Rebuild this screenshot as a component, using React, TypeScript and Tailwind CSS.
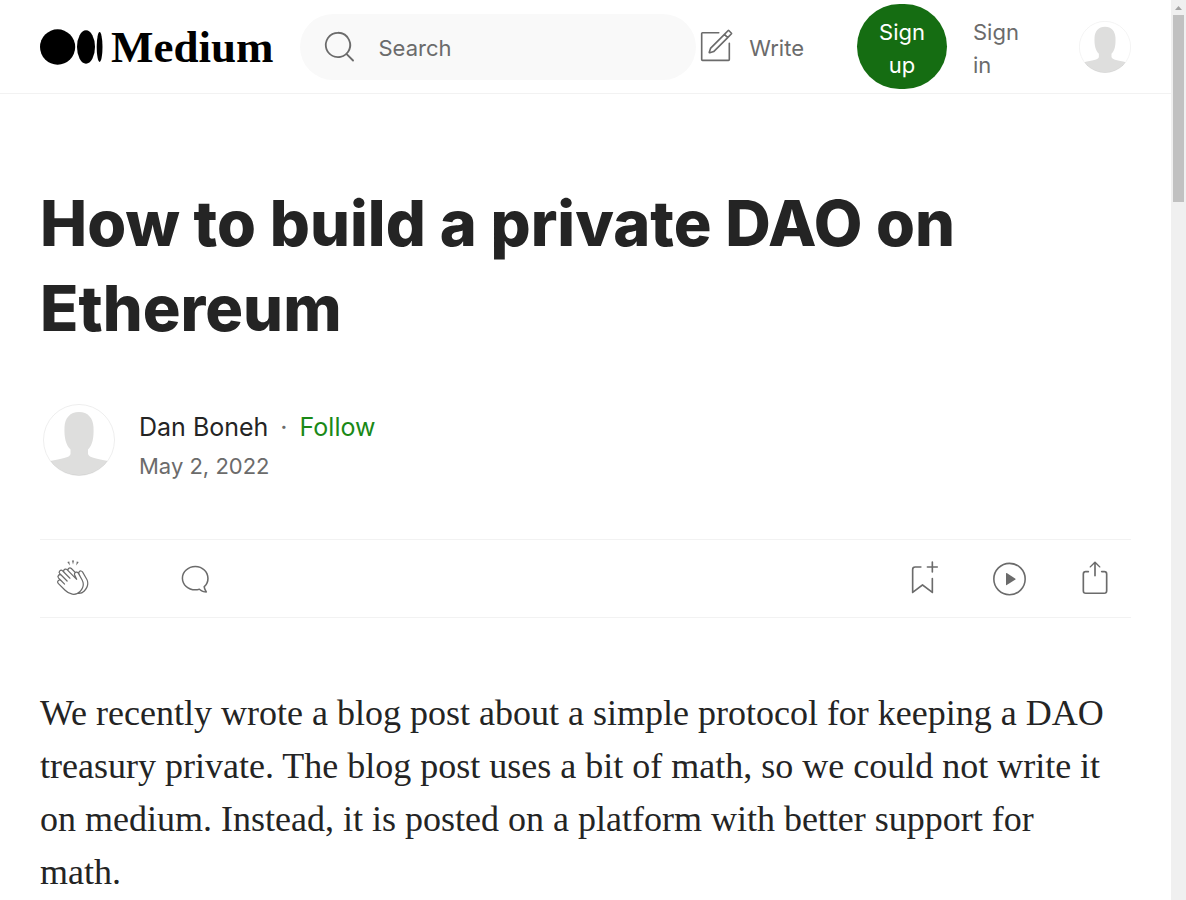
import type { ReactNode } from "react";

function Icon({ className, children }: { className: string; children: ReactNode }) {
  return (
    <svg viewBox="0 0 24 24" fill="none" className={className} aria-hidden="true">
      {children}
    </svg>
  );
}

function Avatar({ className }: { className: string }) {
  return (
    <svg viewBox="0 0 72 72" className={className} role="img" aria-label="Profile">
      <defs>
        <clipPath id="avatar-clip">
          <circle cx="36" cy="36" r="35.5" />
        </clipPath>
      </defs>
      <circle cx="36" cy="36" r="35.5" fill="#fff" />
      <path
        clipPath="url(#avatar-clip)"
        fill="#dededd"
        d="M36 8C27 8 22 14 21.500 23C21 34 23 41 27.500 45.500V50C27 54 18 54.500 7 57L0 72H72L65 57C54 54.500 46 54 45 50V45.500C49.500 41 51 34 50.500 23C50 14 45 8 36 8Z"
      />
      <circle cx="36" cy="36" r="35.500" fill="none" stroke="#000" strokeOpacity="0.07" />
    </svg>
  );
}

function Logo() {
  return (
    <a href="#home" className="flex items-center gap-2 text-black" aria-label="Medium">
      <svg viewBox="0 0 63 36" className="h-9 w-[63px]" aria-hidden="true">
        <ellipse cx="17.600" cy="18" rx="17.600" ry="17.700" />
        <ellipse cx="46" cy="18" rx="9" ry="16.700" />
        <ellipse cx="59.600" cy="18" rx="2.900" ry="15" />
      </svg>
      <span className="font-['Liberation_Serif',serif] text-[45px] leading-[48px] font-bold">Medium</span>
    </a>
  );
}

function Header() {
  return (
    <header className="flex items-center border-b border-[#f2f2f2] px-10 py-1 text-[22px] leading-[33px] text-[#6b6b6b]">
      <Logo />
      <label className="ml-[26px] flex h-[66px] min-w-0 flex-1 items-center gap-5 rounded-full bg-[#f9f9f9] px-5">
        <Icon className="size-[39px] shrink-0">
          <path
            fill="currentColor"
            fillRule="evenodd"
            d="M4.1 11.06a6.95 6.95 0 1 1 13.9 0 6.95 6.95 0 0 1-13.9 0zm6.94-8.05a8.05 8.05 0 1 0 5.13 14.26l3.75 3.75a.56.56 0 1 0 .8-.79l-3.74-3.73A8.05 8.05 0 0 0 11.04 3v.01z"
          />
        </Icon>
        <input
          type="text"
          aria-label="Search"
          placeholder="Search"
          className="w-full min-w-0 bg-transparent pt-1 outline-none placeholder:text-[#6b6b6b]"
        />
      </label>
      <a href="#write" className="flex items-center gap-3.5">
        <Icon className="size-[39px]">
          <path
            fill="currentColor"
            d="M14 4a.5.5 0 0 0 0-1v1zm7 6a.5.5 0 0 0-1 0h1zm-7-7H4v1h10V3zM3 4v16h1V4H3zm1 17h16v-1H4v1zm17-1V10h-1v10h1zm-1 1a1 1 0 0 0 1-1h-1v1zM3 20a1 1 0 0 0 1 1v-1H3zM4 3a1 1 0 0 0-1 1h1V3z"
          />
          <path
            stroke="currentColor"
            d="M17.5 4.5l-8.46 8.46a.25.25 0 0 0-.06.1l-.82 2.47c-.07.2.12.38.31.31l2.47-.82a.25.25 0 0 0 .1-.06L19.5 6.500m-2-2l2.32-2.32c.1-.1.26-.1.36 0l1.64 1.64c.1.1.1.26 0 .36L19.5 6.500m-2-2l2 2"
          />
        </Icon>
        <span className="pt-1">Write</span>
      </a>
      <button type="button" className="ml-[53px] h-[85px] w-[90px] rounded-full bg-[#156d12] px-5 pt-1 text-white">
        Sign up
      </button>
      <a href="#signin" className="ml-[26px] w-[46px] pt-1">
        Sign in
      </a>
      <button type="button" className="ml-[60px]" aria-label="Account">
        <Avatar className="size-[52px]" />
      </button>
    </header>
  );
}

const iconButton = "flex items-center justify-center";

function Actions() {
  return (
    <div className="mt-[53px] flex h-[79px] items-center justify-between border-y border-[#f2f2f2] pr-4 pl-[13px] text-[#6b6b6b]">
      <div className="flex items-center gap-[82px]">
        <button type="button" className={iconButton} aria-label="Clap">
          <Icon className="size-10">
            <path
              fill="currentColor"
              fillRule="evenodd"
              clipRule="evenodd"
              d="M11.37.83L12 3.28l.63-2.45h-1.26zM13.92 3.95l1.52-2.1-1.18-.4-.34 2.5zM8.59 1.84l1.52 2.11-.34-2.5-1.18.4zM18.52 18.92a4.23 4.23 0 0 1-2.62 1.33l.41-.37c2.39-2.4 2.86-4.95 1.4-7.63l-.91-1.6-.8-1.67c-.25-.56-.19-.98.21-1.29a.7.7 0 0 1 .55-.13c.28.05.54.23.72.5l2.37 4.16c.97 1.62 1.14 4.23-1.33 6.7zm-11-.44l-4.15-4.15a.83.83 0 0 1 1.17-1.17l2.16 2.16a.37.37 0 0 0 .51-.52l-2.15-2.16L3.6 11.2a.83.83 0 0 1 1.17-1.17l3.43 3.44a.36.36 0 0 0 .52 0 .36.36 0 0 0 0-.52L5.29 9.51l-.97-.97a.83.83 0 0 1 0-1.16.84.84 0 0 1 1.17 0l.97.97 3.44 3.43a.36.36 0 0 0 .51 0 .37.37 0 0 0 0-.52L6.98 7.83a.82.82 0 0 1-.18-.9.82.82 0 0 1 .76-.51c.22 0 .43.09.58.24l5.8 5.79a.37.37 0 0 0 .58-.42L13.4 9.67c-.26-.56-.2-.98.2-1.29a.7.7 0 0 1 .55-.13c.28.05.55.23.73.5l2.2 3.86c1.3 2.38.87 4.59-1.29 6.75a4.65 4.65 0 0 1-4.19 1.37 7.73 7.73 0 0 1-4.07-2.25zm3.23-12.5l2.12 2.11c-.41.5-.47 1.17-.13 1.9l.22.46-3.52-3.53a.81.81 0 0 1-.1-.36c0-.23.09-.43.24-.59a.85.85 0 0 1 1.17 0zm7.36 1.7a1.86 1.86 0 0 0-1.23-.84 1.44 1.44 0 0 0-1.12.27c-.3.24-.5.55-.58.89-.25-.25-.57-.4-.91-.47-.28-.04-.56 0-.82.1l-2.18-2.18a1.56 1.56 0 0 0-2.2 0c-.2.2-.33.44-.4.7a1.56 1.56 0 0 0-2.63.75 1.6 1.6 0 0 0-2.23-.04 1.56 1.56 0 0 0 0 2.2c-.24.1-.5.24-.72.45a1.56 1.56 0 0 0 0 2.2l.52.52a1.56 1.56 0 0 0-.75 2.61L7 19a8.46 8.46 0 0 0 4.48 2.45 5.18 5.18 0 0 0 3.36-.5 4.89 4.89 0 0 0 4.2-1.51c2.75-2.77 2.54-5.74 1.43-7.59L18.1 7.68z"
            />
          </Icon>
        </button>
        <button type="button" className={iconButton} aria-label="Comments">
          <Icon className="size-10">
            <path
              fill="currentColor"
              d="M18 16.8a7.14 7.14 0 0 0 2.24-5.32c0-4.12-3.53-7.48-8.05-7.48C7.67 4 4 7.36 4 11.48c0 4.13 3.67 7.48 8.2 7.48a8.9 8.9 0 0 0 2.38-.32c.23.2.48.39.75.56 1.06.69 2.2 1.04 3.4 1.04.22 0 .4-.11.48-.29a.5.5 0 0 0-.04-.52 6.4 6.4 0 0 1-1.16-2.65v.02zm-3.12 1.06l-.06-.22-.32.1a8 8 0 0 1-2.3.33c-4.03 0-7.3-2.96-7.3-6.59S8.17 4.9 12.2 4.9c4 0 7.1 2.96 7.1 6.6 0 1.8-.6 3.47-2.02 4.72l-.2.16v.26l.02.3a6.74 6.74 0 0 0 .88 2.4 5.27 5.27 0 0 1-2.17-.86c-.28-.17-.72-.38-.94-.59l.01-.02z"
            />
          </Icon>
        </button>
      </div>
      <div className="flex items-center gap-[46px]">
        <button type="button" className={iconButton} aria-label="Save">
          <svg viewBox="0 0 25 25" fill="none" className="size-[41px]" aria-hidden="true">
            <path
              fill="currentColor"
              d="M18 2.5a.5.5 0 0 1 1 0V5h2.5a.5.5 0 0 1 0 1H19v2.5a.5.5 0 1 1-1 0V6h-2.5a.5.5 0 0 1 0-1H18V2.5zM7 7a1 1 0 0 1 1-1h3.5a.5.5 0 0 0 0-1H8a2 2 0 0 0-2 2v14a.5.5 0 0 0 .8.4l5.7-4.4 5.7 4.4a.5.5 0 0 0 .8-.4v-8.5a.5.5 0 0 0-1 0v7.48l-5.2-4a.5.5 0 0 0-.6 0l-5.2 4V7z"
            />
          </svg>
        </button>
        <button type="button" className={iconButton} aria-label="Listen">
          <Icon className="size-10">
            <circle cx="12.300" cy="12" r="9.400" stroke="currentColor" strokeWidth="0.950" />
            <path fill="currentColor" d="M10.200 8.700v6.700a.3.300 0 0 0 .46.240l5.200-3.350a.3.300 0 0 0 0-.480l-5.200-3.350a.3.300 0 0 0-.46.240z" />
          </Icon>
        </button>
        <button type="button" className={iconButton} aria-label="Share">
          <Icon className="size-10">
            <path
              fill="currentColor"
              fillRule="evenodd"
              d="M15.22 4.93a.42.42 0 0 1-.12.13h.01a.45.45 0 0 1-.29.08.52.52 0 0 1-.3-.13L12.5 3v7.07a.5.5 0 0 1-.5.5.5.5 0 0 1-.5-.5V3.02l-2 2a.45.45 0 0 1-.57.04h-.02a.4.4 0 0 1-.16-.3.4.4 0 0 1 .1-.32l2.8-2.8a.5.5 0 0 1 .7 0l2.8 2.8a.42.42 0 0 1 .07.5zm.78 2.14h1.5a2 2 0 0 1 2 2v10a2 2 0 0 1-2 2h-11a2 2 0 0 1-2-2v-10a2 2 0 0 1 2-2H8a.5.5 0 0 1 .35.14c.1.1.15.22.15.35a.5.5 0 0 1-.15.35.5.5 0 0 1-.35.15H6.4c-.5 0-.9.4-.9.9v10.2a.9.9 0 0 0 .9.9h11.2c.5 0 .9-.4.9-.9V8.96c0-.5-.4-.9-.9-.9H16a.5.5 0 0 1 0-1z"
            />
          </Icon>
        </button>
      </div>
    </div>
  );
}

export default function App() {
  return (
    <div className="flex min-h-screen bg-white font-[Inter,'Liberation_Sans',sans-serif] text-[#242424]">
      <div className="min-w-0 flex-1">
        <Header />
        <main className="px-10 pt-[87px]">
          <h1 className="text-[63px] leading-[85px] font-extrabold">How to build a private DAO on Ethereum</h1>
          <div className="mt-[53px] flex items-start gap-6 pl-[3px]">
            <Avatar className="size-[72px] shrink-0" />
            <div className="pt-1">
              <div className="flex gap-3 text-[25px] leading-[39px]">
                <a href="#author">Dan Boneh</a>
                <span className="text-[#6b6b6b]">·</span>
                <a href="#follow" className="text-[#1a8917]">
                  Follow
                </a>
              </div>
              <p className="text-[22px] leading-[39px] text-[#6b6b6b]">May 2, 2022</p>
            </div>
          </div>
          <Actions />
          <p className="mt-[69px] pr-4 font-['Liberation_Serif',serif] text-[36px] leading-[53px]">
            We recently wrote a blog post about a simple protocol for keeping a DAO treasury private. The blog post uses
            a bit of math, so we could not write it on medium. Instead, it is posted on a platform with better support
            for math.
          </p>
        </main>
      </div>
      <div className="flex w-[15px] shrink-0 flex-col items-center bg-[#f0f0f0]" aria-hidden="true">
        <svg viewBox="0 0 15 15" className="size-[15px]">
          <path d="M4 10h7L7.500 6z" fill="#a3a3a3" />
        </svg>
        <div className="h-[187px] w-[11px] bg-[#c1c1c1]" />
      </div>
    </div>
  );
}
